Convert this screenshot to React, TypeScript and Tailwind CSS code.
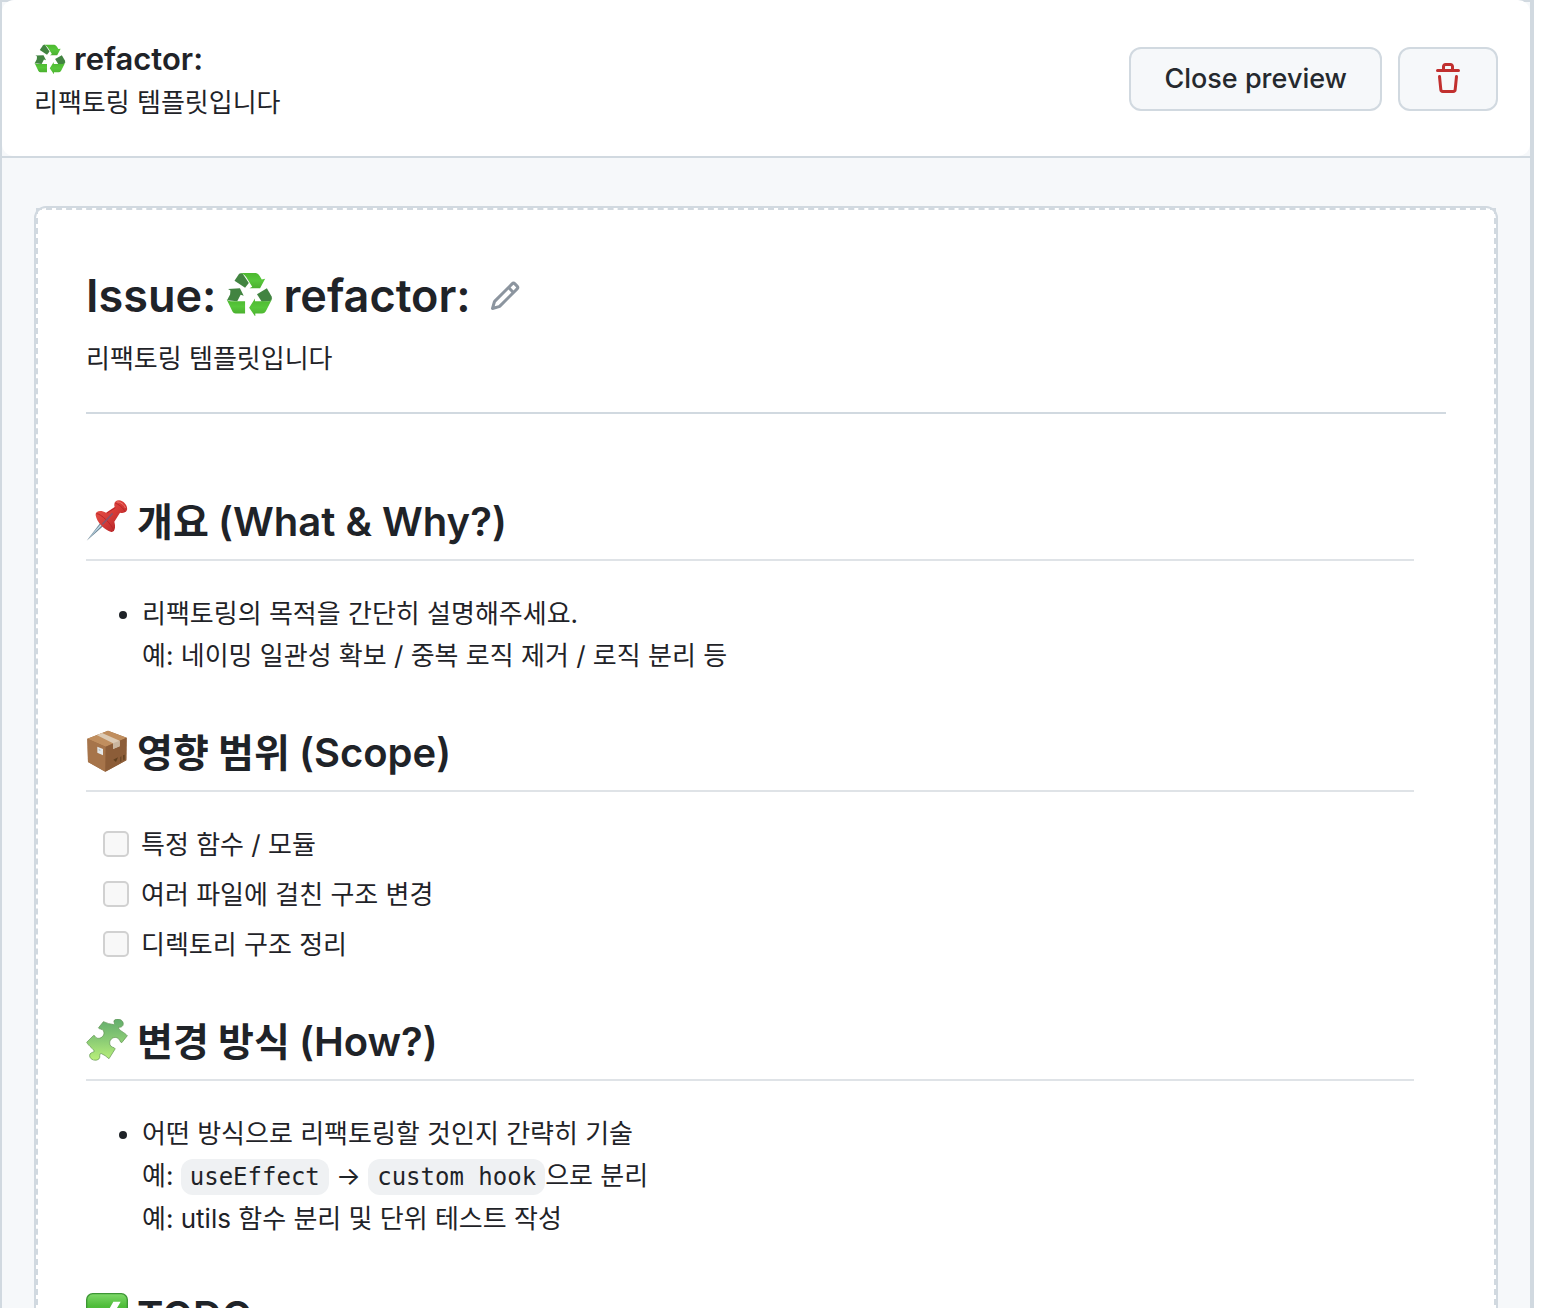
import type { ReactNode } from "react";

function Recycle({ className }: { className: string }) {
  return (
    <svg viewBox="32 22 138 132" className={className} role="img" aria-label="recycle">
      <defs>
        <linearGradient id="rg" x1="0" y1="0" x2="0" y2="1">
          <stop offset="0" stopColor="#4cb82f" />
          <stop offset="0.5" stopColor="#57c73b" />
          <stop offset="1" stopColor="#4bb02f" />
        </linearGradient>
      </defs>
      <g fill="#428441">
        <path d="M57 48 70 28Q73 24 80 26L99 54 88 68Z" />
        <path d="M38 72 73 70 84 92 75 89 65 108 35 105 44 88 45 76Z" />
        <path d="M123 87 152 70 166 94Q169 103 161 108L137 109Z" />
      </g>
      <g fill="url(#rg)">
        <path d="M73 25H120Q127 26 131 34L137 44 147 42 132 70 101 70 109 65 97 46Q88 28 73 25Z" />
        <path d="M34 103Q37 108 46 108H88V144H60Q54 144 51 138Z" />
        <path d="M168 100 149 137Q145 144 138 144H118V153L100 127 117 100V108H156Q164 108 168 100Z" />
      </g>
    </svg>
  );
}

function Pushpin() {
  return (
    <svg viewBox="18 26 126 126" className="mb-1 size-[42px] shrink-0" role="img" aria-label="pushpin">
      <defs>
        <linearGradient id="pin" x1="0" y1="0" x2="1" y2="1">
          <stop offset="0" stopColor="#ea5a4e" />
          <stop offset="0.5" stopColor="#d63a36" />
          <stop offset="1" stopColor="#a51f26" />
        </linearGradient>
      </defs>
      <path d="M20 151 60 99 70 107Z" fill="#6f8796" />
      <path d="M24 146 62 102 66 105Z" fill="#c5e0ef" />
      <path d="M47 75C45 62 62 58 78 67L104 50C100 38 106 30 117 30 132 31 144 47 141 59 137 68 127 69 120 67L103 94C108 111 104 126 94 125 73 119 51 97 47 75Z" fill="url(#pin)" />
      <path d="M49 70C61 68 99 105 101 122" stroke="#b72529" strokeWidth="3" fill="none" />
      <path d="M106 39C112 39 133 54 135 65M81 68 106 52" stroke="#b72529" strokeWidth="3" fill="none" />
      <path d="M67 102 98 69" stroke="#8c5369" strokeWidth="5" />
      <path d="M110 35C120 33 134 44 136 53" stroke="#f07a70" strokeWidth="3" fill="none" />
    </svg>
  );
}

function Package() {
  return (
    <svg viewBox="0 0 126 126" className="mb-1 size-[42px] shrink-0" role="img" aria-label="package">
      <path d="M4 26 66 2 122 23 121 91 58 125 6 96Z" fill="#9b6b43" />
      <path d="M4 26 66 2 122 23 59 50Z" fill="#c08e5e" />
      <path d="M4 26 59 50 58 125 6 96Z" fill="#a6744a" />
      <path d="M59 50 122 23 121 91 58 125Z" fill="#8c5d38" />
      <path d="M32 15 48 9 101 32V49L81 57V40Z" fill="#dccab4" />
      <path d="M81 40 101 32V49L81 57Z" fill="#c9b59e" />
      <path d="M34 50 51 57V76L34 68Z" fill="#e4e7e8" />
      <path d="M38 57 43 59V63L38 61Z" fill="#a9b6bd" />
      <path d="M82 89 96 82 90 96ZM103 81 106 79V94L103 96ZM111 76 116 74V89L112 91Z" fill="#61401f" />
    </svg>
  );
}

function Puzzle() {
  return (
    <svg viewBox="18 26 128 128" className="mb-1 size-[42px] shrink-0" role="img" aria-label="puzzle piece">
      <defs>
        <linearGradient id="pz" x1="0" y1="0" x2="0" y2="1">
          <stop offset="0" stopColor="#62ad6c" />
          <stop offset="0.5" stopColor="#8acb75" />
          <stop offset="1" stopColor="#b9f07a" />
        </linearGradient>
      </defs>
      <path
        d="M71 34Q86 41 102 43C109 41 99 34 105 29 114 23 128 27 131 37 134 47 125 53 117 51 116 60 136 67 144 77L127 98C120 97 123 87 112 83 99 79 87 91 91 104 94 114 105 111 107 117L88 147Q76 136 64 131C56 132 63 142 58 147 49 156 30 151 29 138 28 129 39 128 43 125 42 117 27 110 20 97L41 76C48 76 44 83 54 85 67 86 77 73 71 62 67 54 58 59 56 53Z"
        fill="url(#pz)"
        stroke="#5b8f4e"
        strokeWidth="2"
        strokeLinejoin="round"
      />
    </svg>
  );
}

function Check() {
  return (
    <svg viewBox="0 0 126 126" className="mb-1 size-[42px] shrink-0" role="img" aria-label="done">
      <defs>
        <linearGradient id="ck" x1="0" y1="0" x2="0" y2="1">
          <stop offset="0" stopColor="#7fd96a" />
          <stop offset="0.3" stopColor="#4fbd3a" />
          <stop offset="1" stopColor="#3fa52f" />
        </linearGradient>
      </defs>
      <rect x="2" y="2" width="122" height="122" rx="18" fill="url(#ck)" stroke="#3d9635" strokeWidth="4" />
      <path d="M82 26H104L60 102H46L24 72 38 62 52 80Z" fill="#fff" />
    </svg>
  );
}

function Trash() {
  return (
    <svg viewBox="0 0 16 16" className="size-8 fill-[#c1302f]" aria-hidden="true">
      <path d="M11 1.75V3h2.25a.75.75 0 0 1 0 1.5H2.75a.75.75 0 0 1 0-1.5H5V1.75C5 .784 5.784 0 6.75 0h2.5C10.216 0 11 .784 11 1.75ZM4.496 6.675l.66 6.6a.25.25 0 0 0 .249.225h5.19a.25.25 0 0 0 .249-.225l.66-6.6a.75.75 0 0 1 1.492.149l-.66 6.6A1.748 1.748 0 0 1 10.595 15h-5.19a1.75 1.75 0 0 1-1.741-1.575l-.66-6.6a.75.75 0 1 1 1.492-.15ZM6.5 1.75V3h3V1.75a.25.25 0 0 0-.25-.25h-2.5a.25.25 0 0 0-.25.25Z" />
    </svg>
  );
}

function Pencil() {
  return (
    <svg viewBox="0 0 16 16" className="size-8 fill-[#8c959f]" aria-hidden="true">
      <path d="M11.013 1.427a1.75 1.75 0 0 1 2.474 0l1.086 1.086a1.75 1.75 0 0 1 0 2.474l-8.61 8.61c-.21.21-.47.364-.756.445l-3.251.93a.75.75 0 0 1-.927-.928l.929-3.25c.081-.286.235-.547.445-.758l8.61-8.61Zm.176 4.823L9.75 4.81l-6.286 6.287a.253.253 0 0 0-.064.108l-.558 1.953 1.953-.558a.253.253 0 0 0 .108-.064Zm1.238-3.763a.25.25 0 0 0-.354 0L10.811 3.75l1.439 1.44 1.263-1.263a.25.25 0 0 0 0-.354Z" />
    </svg>
  );
}

function SectionHeading({ icon, korean, latin }: { icon: ReactNode; korean?: string; latin: string }) {
  return (
    <h2 className="mt-12 flex items-center gap-[9px] border-b-2 border-[#dfe3e7] pb-[10px] text-[40px] leading-[55px] font-semibold">
      {icon}
      <span>
        {korean && <span className="text-[39px] font-bold">{korean} </span>}
        {latin}
      </span>
    </h2>
  );
}

function Code({ children }: { children: ReactNode }) {
  return (
    <code className="rounded-xl bg-[#eff1f3] px-[9px] py-1 font-['DejaVu_Sans_Mono',monospace] text-[24px]">
      {children}
    </code>
  );
}

const scopeItems = ["특정 함수 / 모듈", "여러 파일에 걸친 구조 변경", "디렉토리 구조 정리"];

export default function App() {
  return (
    <main className="h-screen overflow-hidden bg-white pr-3 font-['Inter','Noto_Sans_CJK_KR',sans-serif] text-[26px] leading-[42px] text-[#1f2328]">
      <div className="border-r-4 border-l-2 border-[#d1d9e0] bg-[#f6f8fa]">
        <div className="border-b-2 border-[#d1d9e0] bg-linear-to-b from-[#d1d9e0] from-[2px] to-[#f6f8fa] to-[2px]">
          <header className="flex items-center justify-between rounded-xl bg-white px-8 pt-[34px] pb-8">
            <div className="pt-1">
              <h3 className="flex items-center gap-2 text-[31px] font-semibold">
                <Recycle className="w-8" />
                refactor:
              </h3>
              <p className="mt-0.5">리팩토링 템플릿입니다</p>
            </div>
            <div className="flex gap-4">
              <button type="button" className="h-16 rounded-xl border-2 border-[#d1d9e0] bg-[#f6f8fa] px-[33px] text-[27px] font-medium text-[#25292e]">
                Close preview
              </button>
              <button type="button" aria-label="Delete template" className="flex h-16 w-[100px] items-center justify-center rounded-xl border-2 border-[#d1d9e0] bg-[#f6f8fa]">
                <Trash />
              </button>
            </div>
          </header>
        </div>

        <div className="px-8 pt-12">
          <div className="rounded-xl border-2 border-[#d1d9e0] bg-white">
            <article className="border-2 border-dashed border-[#d1d9e0] px-12 pt-12 pb-12">
              <div className="flex items-center gap-[18px]">
                <h1 className="flex items-center gap-[10px] text-[45px] leading-[76px] font-semibold">
                  Issue:
                  <Recycle className="mb-1 w-[47px]" />
                  refactor:
                </h1>
                <button type="button" aria-label="Edit template">
                  <Pencil />
                </button>
              </div>
              <p className="border-b-2 border-[#d1d9e0] pt-1 pb-8">리팩토링 템플릿입니다</p>

              <div className="pt-8 pr-8">
                <SectionHeading icon={<Pushpin />} korean="개요" latin="(What & Why?)" />
                <ul className="list-disc pt-8 pl-14">
                  <li>
                    리팩토링의 목적을 간단히 설명해주세요.
                    <br />
                    예: 네이밍 일관성 확보 / 중복 로직 제거 / 로직 분리 등
                  </li>
                </ul>

                <SectionHeading icon={<Package />} korean="영향 범위" latin="(Scope)" />
                <ul className="flex flex-col gap-2 pt-8 pl-[17px]">
                  {scopeItems.map((item) => (
                    <li key={item}>
                      <label className="flex items-center gap-3">
                        <input type="checkbox" disabled className="mb-0.5 size-[26px] appearance-none rounded-[5px] border-2 border-[#d1d1d1] bg-[#f8f8f8]" />
                        {item}
                      </label>
                    </li>
                  ))}
                </ul>

                <SectionHeading icon={<Puzzle />} korean="변경 방식" latin="(How?)" />
                <ul className="list-disc pt-8 pl-14">
                  <li>
                    어떤 방식으로 리팩토링할 것인지 간략히 기술
                    <br />
                    예: <Code>useEffect</Code> → <Code>custom hook</Code>으로 분리
                    <br />
                    예: utils 함수 분리 및 단위 테스트 작성
                  </li>
                </ul>

                <SectionHeading icon={<Check />} latin="TODO" />
              </div>
            </article>
          </div>
        </div>
      </div>
    </main>
  );
}
